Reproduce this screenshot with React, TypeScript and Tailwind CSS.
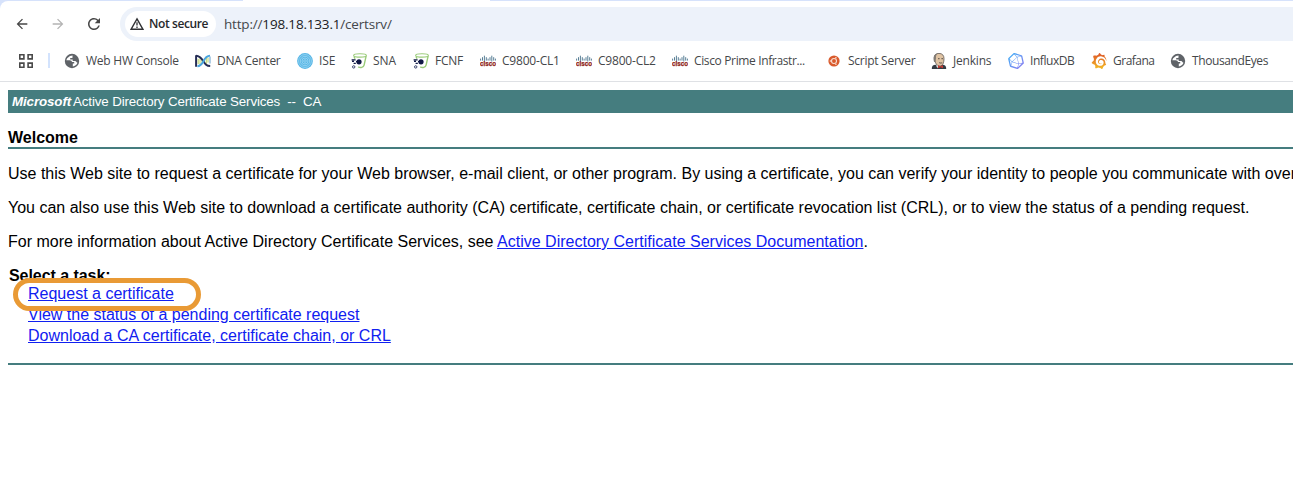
import type { ReactNode } from 'react';
import { MdArrowBack, MdArrowForward, MdRefresh } from 'react-icons/md';
import { SiGrafana, SiInfluxdb } from 'react-icons/si';

const GlobeIcon = () => (
  <svg width="16" height="16" viewBox="0 0 16 16">
    <circle cx="8" cy="8" r="7.2" fill="#5f6368" />
    <path d="M8.6 2.4 6 3.1 3.2 5.3 2.3 7.3h3.2c1.8 0 2.4.7 2.4 1.7h2.3v1.5H8.8v2.9c2.1-.2 4-1.5 4.7-3.6-1-.3-1-1.6-2.2-1.9H8.7V6.6H6.2V4.9h2.2z" fill="#fff" />
  </svg>
);

const DnaIcon = () => (
  <svg width="16" height="16" viewBox="0 0 16 16" fill="none">
    <path d="M3.2 6v5M5 5v6.5M7 6.5v3M9.5 7v3M11.3 4.5v7M13 4.5v5" stroke="#b5cf55" strokeWidth=".9" />
    <path d="M1.1 2.2v11.6M1 2.8c3.6.2 5 1.8 7.2 5.2 2.1 3.3 3.3 5 7 5.1" stroke="#252d55" strokeWidth="2" />
    <path d="M2.4 13.2c3.2-.1 4.4-1.9 6-5C10.1 4.9 11.5 3 15 2.8" stroke="#4ba5df" strokeWidth="2.1" />
    <path d="M15 3.5v7" stroke="#8fb9dc" strokeWidth="1.4" />
  </svg>
);

const IseIcon = () => (
  <svg width="16" height="16" viewBox="0 0 16 16" fill="none">
    <circle cx="8" cy="8" r="7.9" fill="#58b6e6" />
    <g stroke="#b4e2f6" strokeWidth=".6">
      <circle cx="8" cy="8" r="6.4" />
      <circle cx="8" cy="8" r="4.7" />
      <circle cx="8" cy="8" r="3" />
      <circle cx="8" cy="8" r="1.3" />
    </g>
  </svg>
);

const SnaIcon = () => (
  <svg width="16" height="16" viewBox="0 0 16 16" fill="none">
    <ellipse cx="9" cy="2.4" rx="6.4" ry="1.7" stroke="#9acb79" strokeWidth="1.1" />
    <path d="M3 3.5 4 5.8M15.1 3.2l-2 9c-.5 2.2-3.7 2.9-5.9 1.6" stroke="#9acb79" strokeWidth="1.4" />
    <circle cx="8" cy="8.8" r="2.6" fill="#101846" />
    <path d="M8 8.6H5M.6 6.8h4M4.8 10.4H2.6M1 8.4h2" stroke="#101846" strokeWidth="1.2" />
    <circle cx="2.7" cy="13.9" r="1.2" stroke="#39426d" />
  </svg>
);

const CiscoIcon = () => (
  <svg width="16" height="16" viewBox="0 0 16 16">
    <path d="M.6 5.6v2M2.5 4.2v3.4M4.4 2.7v5.8M6.3 4.2v3.4M8.1 5.6v2M10 4.2v3.4M11.8 2.7v5.8M13.7 4.2v3.4M15.4 5.6v2" stroke="#46718a" strokeWidth=".9" />
    <text x="0" y="13.2" textLength="16" lengthAdjust="spacingAndGlyphs" fontFamily="Liberation Sans, sans-serif" fontSize="6.6" fontWeight="700" fill="#8d1b14" stroke="#8d1b14" strokeWidth=".25">cisco</text>
  </svg>
);

const UbuntuIcon = () => (
  <svg width="16" height="16" viewBox="0 0 16 16" fill="none">
    <circle cx="8" cy="8" r="5.6" fill="#d95a2c" />
    <circle cx="8" cy="8" r="2.5" stroke="#f9ddd0" strokeWidth="1.1" />
    <g fill="#f9ddd0">
      <circle cx="4.4" cy="8" r=".8" />
      <circle cx="9.9" cy="4.8" r=".8" />
      <circle cx="9.9" cy="11.2" r=".8" />
    </g>
  </svg>
);

const JenkinsIcon = () => (
  <svg width="16" height="16" viewBox="0 0 16 16">
    <path d="M.8 16c0-3 1-4.2 4-4.2h6.4c3 0 4 1.2 4 4.2z" fill="#333b43" />
    <path d="M3.4 5C3 1.8 5 .4 8 .4c3.3 0 5 2 5 5.1 0 4.1-1.2 7.6-4.2 7.6C5.4 13.1 3.8 9 3.4 5z" fill="#dfc3a3" stroke="#494440" strokeWidth=".7" />
    <path d="M3 8.8C1.8 4.2 3 1.2 6.4.8 5 2.2 4.8 3.7 5 5.2L4.2 9.3z" fill="#817b75" />
    <path d="M7 5.7h1.6M10.4 5.7H12M8.2 9.6c1 .6 2 .6 3 0" stroke="#3a3431" strokeWidth=".8" fill="none" />
    <path d="m7 12.2 2.4 1.1 2.6-1.1v3l-2.6-1-2.4 1z" fill="#c33a32" />
    <path d="m5 12.2 1.5 3.3.5-3z" fill="#fff" />
  </svg>
);

const InfluxIcon = () => (
  <svg width="16" height="16" viewBox="0 0 16 16">
    <defs>
      <linearGradient id="influx" x1="0" y1="0" x2="1" y2="1">
        <stop stopColor="#3cb2f6" />
        <stop offset="1" stopColor="#9078f0" />
      </linearGradient>
    </defs>
    <SiInfluxdb size={16} fill="url(#influx)" />
  </svg>
);

const GrafanaIcon = () => (
  <svg width="16" height="16" viewBox="0 0 16 16">
    <defs>
      <linearGradient id="grafana" x1="0" y1="0" x2="0" y2="1">
        <stop stopColor="#dd5428" />
        <stop offset="1" stopColor="#f4bc25" />
      </linearGradient>
    </defs>
    <SiGrafana size={16} fill="url(#grafana)" />
  </svg>
);

const WarningIcon = () => (
  <svg width="14" height="14" viewBox="0 0 14 14" fill="none" stroke="#303134">
    <path d="M7 1.8 13 12.3H1z" strokeWidth="1.4" />
    <path d="M7 5.2v3.3M7 9.5v1.4" strokeWidth="1.3" />
  </svg>
);

interface Bookmark {
  label: string;
  icon: ReactNode;
  cell: string;
  tracking: string;
}

const bookmarks: Bookmark[] = [
  { label: 'Web HW Console', icon: <GlobeIcon />, cell: 'w-[131px]', tracking: 'tracking-[-0.24px]' },
  { label: 'DNA Center', icon: <DnaIcon />, cell: 'w-[102px]', tracking: 'tracking-[-0.25px]' },
  { label: 'ISE', icon: <IseIcon />, cell: 'w-[54px]', tracking: 'tracking-[-0.1px]' },
  { label: 'SNA', icon: <SnaIcon />, cell: 'w-[62px]', tracking: 'tracking-[-0.1px]' },
  { label: 'FCNF', icon: <SnaIcon />, cell: 'w-[67px]', tracking: 'tracking-[-0.3px]' },
  { label: 'C9800-CL1', icon: <CiscoIcon />, cell: 'w-[96px]', tracking: 'tracking-[-0.2px]' },
  { label: 'C9800-CL2', icon: <CiscoIcon />, cell: 'w-[96px]', tracking: 'tracking-[-0.2px]' },
  { label: 'Cisco Prime Infrastr...', icon: <CiscoIcon />, cell: 'w-[154px]', tracking: 'tracking-[-0.36px]' },
  { label: 'Script Server', icon: <UbuntuIcon />, cell: 'w-[105px]', tracking: 'tracking-[-0.27px]' },
  { label: 'Jenkins', icon: <JenkinsIcon />, cell: 'w-[77px]', tracking: 'tracking-[-0.2px]' },
  { label: 'InfluxDB', icon: <InfluxIcon />, cell: 'w-[83px]', tracking: 'tracking-[-0.45px]' },
  { label: 'Grafana', icon: <GrafanaIcon />, cell: 'w-[79px]', tracking: 'tracking-[-0.5px]' },
  { label: 'ThousandEyes', icon: <GlobeIcon />, cell: 'w-[120px]', tracking: 'tracking-[-0.4px]' },
];

function BrowserToolbar() {
  return (
    <header className="bg-[#d6e2fb] font-['Open_Sans',sans-serif]">
      <div className="flex h-px">
        <div className="w-[243px]" />
        <div className="w-[247px] bg-white" />
      </div>
      <div className="h-[81px] rounded-tl-[8px] border-b border-[#dfe1e5] bg-white pt-[6px]">
        <div className="flex h-[34px] items-center">
          <div className="flex w-[120px] shrink-0 gap-[20px] pl-[14px]">
            <MdArrowBack size={16} color="#474747" />
            <MdArrowForward size={16} color="#b4b4b4" />
            <MdRefresh size={18} color="#474747" className="-mt-px -ml-px" />
          </div>
          <div className="flex h-[34px] flex-1 items-center rounded-l-full bg-[#edf2fa] pl-[5px]">
            <div className="flex h-[26px] w-[91px] items-center gap-[5px] rounded-full bg-white pl-[5px]">
              <WarningIcon />
              <span className="text-[12px] font-semibold tracking-[-0.4px] whitespace-nowrap text-[#27292c]">Not secure</span>
            </div>
            <span className="ml-[8px] text-[13.5px] tracking-[-0.18px] text-[#44474b]">
              http://<span className="text-[#202124]">198.18.133.1</span>/certsrv/
            </span>
          </div>
        </div>
        <nav className="flex h-[39px] items-center">
          <svg width="14" height="14" viewBox="0 0 14 14" fill="none" stroke="#4a4a4a" strokeWidth="1.6" className="ml-[19px] shrink-0">
            <path d="M.8.8h4.1v4.1H.8zM9.1.8h4.1v4.1H9.1zM.8 9.1h4.1v4.1H.8zM9.1 9.1h4.1v4.1H9.1z" />
          </svg>
          <div className="mr-[14px] ml-[15px] h-[15px] w-[2px] shrink-0 bg-[#d3e3fd]" />
          {bookmarks.map(({ label, icon, cell, tracking }) => (
            <div key={label} className={`flex shrink-0 items-center gap-[6px] ${cell}`}>
              <span className="shrink-0">{icon}</span>
              <span className={`text-[12px] leading-4 whitespace-nowrap text-[#45474a] ${tracking}`}>{label}</span>
            </div>
          ))}
        </nav>
      </div>
    </header>
  );
}

function TaskLink({ children }: { children: ReactNode }) {
  return (
    <a href="#" className="w-fit text-[#1020f0] underline">
      {children}
    </a>
  );
}

export default function App() {
  return (
    <div className="h-[502px] w-full overflow-hidden bg-white">
      <BrowserToolbar />
      <main className="pt-2 pl-2 font-['Liberation_Sans',Arial,sans-serif] text-[16px] leading-[18px] whitespace-nowrap text-black">
        <div className="flex h-[23px] items-center bg-[#457d7f] pl-1 text-[13.33px] text-white">
          <b className="mr-[2px] tracking-[-0.1px] italic">Microsoft</b>
          <span className="tracking-[-0.13px] whitespace-pre">Active Directory Certificate Services  --  CA</span>
        </div>
        <h1 className="mt-4 font-bold">Welcome</h1>
        <div className="h-[2px] bg-[#457d7f]" />
        <p className="mt-4">
          Use this Web site to request a certificate for your Web browser, e-mail client, or other program. By using a certificate, you can verify your identity to people you communicate with over
        </p>
        <p className="mt-4">
          You can also use this Web site to download a certificate authority (CA) certificate, certificate chain, or certificate revocation list (CRL), or to view the status of a pending request.
        </p>
        <p className="mt-4">
          For more information about Active Directory Certificate Services, see <TaskLink>Active Directory Certificate Services Documentation</TaskLink>.
        </p>
        <h2 className="mt-4 pl-px font-bold tracking-[-0.05px]">Select a task:</h2>
        <div className="relative flex flex-col gap-[3px] pl-5">
          <div className="h-[18px]" />
          <TaskLink>View the status of a pending certificate request</TaskLink>
          <TaskLink>Download a CA certificate, certificate chain, or CRL</TaskLink>
          <div className="absolute top-[-7px] left-[5px] flex h-[33px] w-[188px] items-center rounded-full border-[5px] border-[#e99a35] bg-white pb-[2px] pl-[10px]">
            <TaskLink>Request a certificate</TaskLink>
          </div>
        </div>
        <div className="mt-[18px] h-[2px] bg-[#457d7f]" />
      </main>
    </div>
  );
}
